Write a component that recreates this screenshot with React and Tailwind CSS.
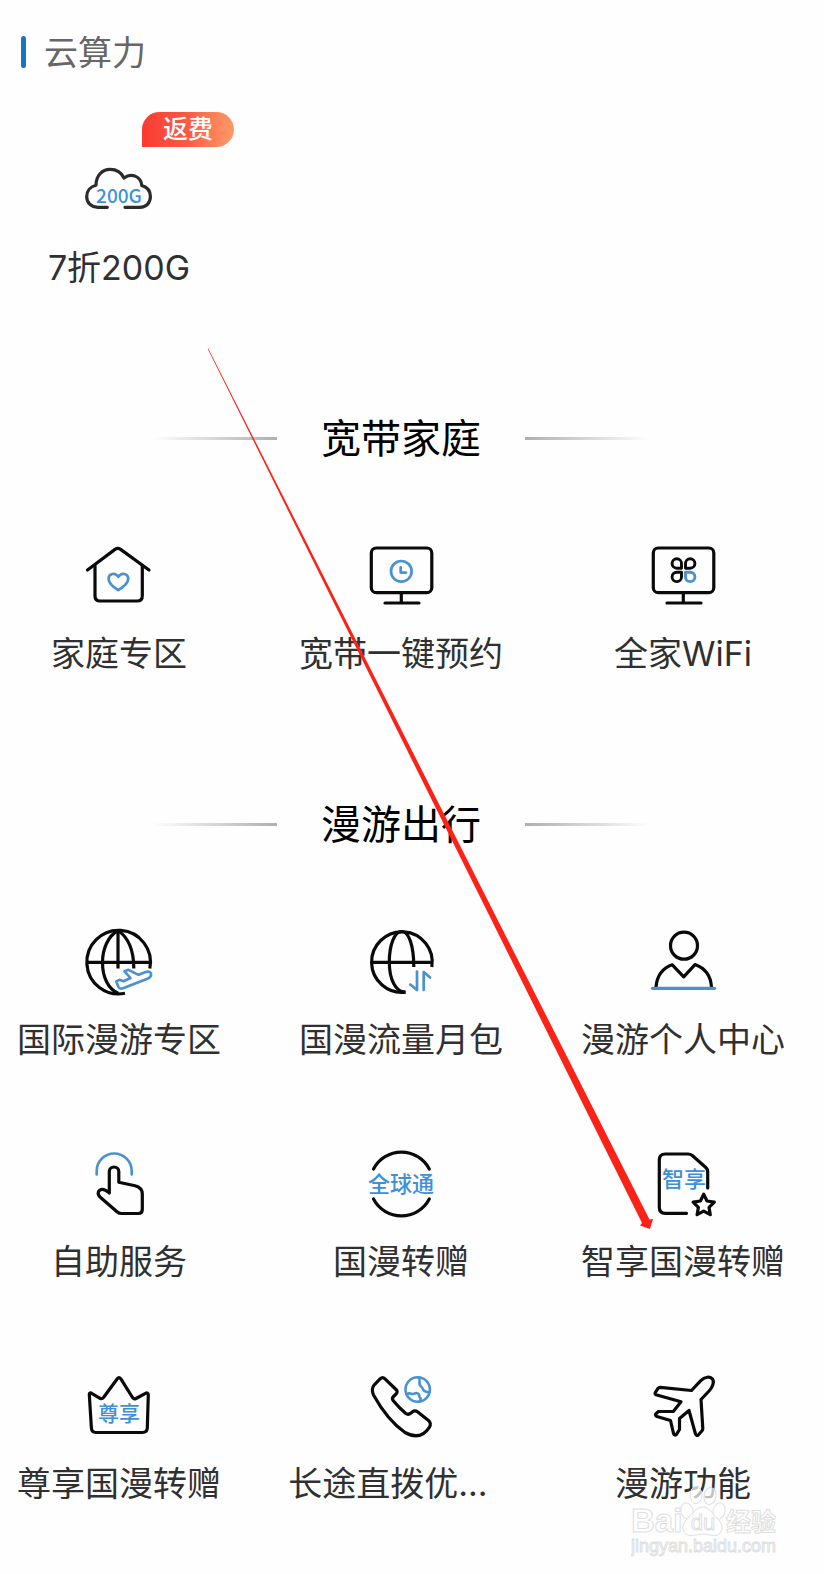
import React from 'react';

const BLUE = '#4a92cf';

const Icon = ({ children }) => (
  <svg viewBox="0 0 72 72" className="w-[72px] h-[72px] overflow-visible" fill="none" stroke="#0a0a0a" strokeWidth="3.2" strokeLinecap="round" strokeLinejoin="round" aria-hidden="true">
    {children}
  </svg>
);

const IconText = ({ x = 36, y, size = 22, children }) => (
  <text x={x} y={y} fontSize={size} textAnchor="middle" fill="#3f90d8" stroke="none" className="font-['Noto_Sans_CJK_SC',sans-serif] font-medium">
    {children}
  </text>
);

const CloudIcon = () => (
  <Icon>
    <g stroke="#2b2b2b">
      <path d="M24.3 54.3H15C8 54.3 3.7 49.5 3.7 43.7C3.7 38 7.5 33.5 13 32.3C13 23 19 16.3 27 16.3C33.5 16.3 38.5 19.5 41 25C48 19.5 58 23 58.7 32.5C64 34 67.4 38 67.4 43.5C67.4 50 63 54.3 57 54.3H42" />
    </g>
    <IconText y={50} size={19}>200G</IconText>
  </Icon>
);

const HomeIcon = () => (
  <Icon>
    <path d="M4.5 31L32 10.4Q34.8 8.5 37.6 10.4L66 31" />
    <path d="M12 26.5V57Q12 62 17 62H54.3Q59.3 62 59.3 57V26.5" />
    <path stroke={BLUE} strokeWidth="2.7" d="M35.3 51.2C29.5 47.7 25.6 44 25.6 39.8C25.6 34.5 32 33 35.3 37.8C38.6 33 45.2 34.5 45.2 39.8C45.2 44 41 47.7 35.3 51.2Z" />
  </Icon>
);

const MonitorIcon = ({ children }) => (
  <Icon>
    <rect x="6.3" y="9" width="60.5" height="44.7" rx="5" />
    <path d="M36.3 54V64M20 64H54" />
    {children}
  </Icon>
);

const ClockMonitorIcon = () => (
  <MonitorIcon>
    <g stroke={BLUE} strokeWidth="2.7">
      <circle cx="36.3" cy="32.3" r="10.3" />
      <path d="M35.7 28.3V33.6H41" />
    </g>
  </MonitorIcon>
);

const WifiMonitorIcon = () => (
  <MonitorIcon>
    <g strokeWidth="2.9">
      <path d="M34.5 29.2H29.8A4.7 4.7 0 1 1 34.5 24.5Z" />
      <path d="M38.5 29.2V24.5A4.7 4.7 0 1 1 43.2 29.2Z" />
      <path d="M34.5 33.2V37.9A4.7 4.7 0 1 1 29.8 33.2Z" />
      <path stroke={BLUE} d="M38.5 33.2H43.2A4.7 4.7 0 1 1 38.5 37.9Z" />
    </g>
  </MonitorIcon>
);

const GlobePlaneIcon = () => (
  <Icon>
    <g strokeLinecap="butt">
      <path d="M42 68.3A31.8 31.8 0 1 1 66.8 43.5" />
      <path d="M3.5 37.3H67M35 5V43.5" />
      <path d="M35 5.5C25 11 19.5 24 19.5 37.5C19.5 52 25 64 35.5 68.5" />
      <path d="M35 5.5C46 13 50.8 26 50.8 43.5" />
    </g>
    <path stroke={BLUE} strokeWidth="2.6" d="M33.3 56.5L35.5 62C36.3 63.8 38 64 40 63.3L65 53.5C70 51 68.500 45.5 63.5 46.8L55.5 49.8L45.5 44.8L41.5 46.3L47.5 53L40.5 56.3L36.5 54.8Z" />
  </Icon>
);

const GlobeDataIcon = () => (
  <Icon>
    <g strokeLinecap="butt">
      <path d="M40.5 67.2A30.3 30.3 0 1 1 66.8 42" />
      <path d="M6 37.3H67" />
      <path d="M40.5 67.2C30.5 67.5 24.3 54 24.3 37C24.3 20 29.5 6.5 36.7 6.5C44 6.5 48.8 21 48.8 42" />
    </g>
    <path stroke={BLUE} strokeWidth="2.7" d="M45.3 59.5L52 65V46.5M58.7 65V47L65 52.5" />
  </Icon>
);

const PersonIcon = () => (
  <Icon>
    <circle cx="37" cy="20.7" r="13.5" />
    <path d="M9 62C10 51 16 43 25.3 39.8L36.7 51.8L48 39.6C57.5 43 63.7 51 64.5 62" />
    <path stroke={BLUE} d="M5.5 63.3H67.5" />
  </Icon>
);

const TouchIcon = () => (
  <Icon>
    <path stroke={BLUE} strokeWidth="2.7" d="M13.7 27.5V24A17.5 17.5 0 0 1 48.7 24V27.5" />
    <path d="M26.3 46V24.5C26.3 18.5 35.8 18.5 35.8 24.5V35.3L52 38.7C57.5 40 59.3 42.5 59.3 47V62.5Q59.3 66.5 55.3 66.5H38.5Q36 66.5 34 64.7L17 50C13.5 46.5 15.5 42.8 19 42.3C22 42 23.5 43.5 26.3 46Z" />
  </Icon>
);

const GlobalPassIcon = () => (
  <Icon>
    <path d="M8.5 22A31.5 31.5 0 0 1 64.3 22" />
    <path d="M8.5 52A31.5 31.5 0 0 0 64.3 52" />
    <IconText y={45}>全球通</IconText>
  </Icon>
);

const SmartCardIcon = () => (
  <Icon>
    <path d="M39.5 66.3H18.3Q12.3 66.3 12.3 60.3V13Q12.3 7 18.3 7H41Q43.5 7 45.3 8.5L58.8 20.5Q60.7 22.3 60.7 24.5V41" />
    <path d="M56.7 47.2L60 54L67.3 55.2L62 60.3L63.3 67.7L56.7 64.2L50.1 67.7L51.4 60.3L46.1 55.2L53.4 54Z" />
    <IconText x={37} y={40}>智享</IconText>
  </Icon>
);

const CrownIcon = () => (
  <Icon>
    <path d="M6.3 25.5C6.3 24 7.5 23.5 8.7 24.3L17 29.3Q19 30.3 20.5 28.5L34.3 9.7Q36 7.7 37.7 9.7L49.5 28.5Q51 30.5 53 29.5L62.5 24.3C64 23.5 65.3 24.3 65.3 25.7L64.3 59Q64 63.5 59.5 63.5H13Q8.7 63.5 8.4 59Z" />
    <IconText y={52} size={21}>尊享</IconText>
  </Icon>
);

const PhoneIcon = () => (
  <Icon>
    <path d="M20 9.8L31 20.5Q33.3 22.7 31 25L28.5 27.5Q26.5 29.5 28.3 31.8C33 37.5 36 40.5 40.5 44.3Q43.3 46.3 46 44L47.5 42.8Q50 41 52.8 43L63.5 51.5Q66.8 54.5 64.3 58.3C58 68 50 69 40 63.5C27 54.5 16 39.5 8.5 26C6.8 22 7 18.5 9.3 15.8L15.3 9.7Q17.7 7.5 20 9.8Z" />
    <g stroke={BLUE} strokeWidth="2.6">
      <circle cx="52.7" cy="20.5" r="12.2" />
      <path d="M53.5 8.5C56.5 12 52.5 15 56 17.5C58.5 19 57.5 22 60.5 22.5L64 23.5" />
      <path d="M42 25.5C45 22.5 46.5 26.5 49.5 24.5C52.5 23 54.5 25.5 54.5 28C56.5 29 55.5 31 54.5 32.5" />
    </g>
  </Icon>
);

const PlaneIcon = () => (
  <Icon>
    <path d="M53.5 11.8C58 7.3 63 7.5 65.3 9.8C67.5 12.5 66 17.5 62.5 21.5L54 30.5L55.8 59.5Q55.8 61 54.8 62L51.5 65.7Q49.5 67.5 48.5 65L42 41.5L32.5 49.5V60.5L29.5 65.3Q27.5 67.2 26.5 64.5L23.5 51.5L10 47.5Q7.5 46.3 9 44.7L11.5 42.5L26.3 42.5L34 32.7L9 25.7Q7.5 25 8.3 23.5L11 19.3Q11.7 18.3 13.3 18.3L44.5 21.5Z" />
  </Icon>
);

const cloudItems = [{ label: '7折200G', icon: CloudIcon, badge: '返费' }];

const homeItems = [
  { label: '家庭专区', icon: HomeIcon },
  { label: '宽带一键预约', icon: ClockMonitorIcon },
  { label: '全家WiFi', icon: WifiMonitorIcon },
];

const roamingItems = [
  { label: '国际漫游专区', icon: GlobePlaneIcon },
  { label: '国漫流量月包', icon: GlobeDataIcon },
  { label: '漫游个人中心', icon: PersonIcon },
  { label: '自助服务', icon: TouchIcon },
  { label: '国漫转赠', icon: GlobalPassIcon },
  { label: '智享国漫转赠', icon: SmartCardIcon },
  { label: '尊享国漫转赠', icon: CrownIcon },
  { label: '长途直拨优...', icon: PhoneIcon, clipped: true },
  { label: '漫游功能', icon: PlaneIcon },
];

const ServiceGrid = ({ items }) => (
  <div className="grid grid-cols-3 gap-y-[84px]">
    {items.map(({ label, icon: ItemIcon, badge, clipped }) => (
      <a key={label} href="#" className="flex flex-col items-center gap-[18px]">
        <span className="relative block">
          <ItemIcon />
          {badge && (
            <span className="absolute left-[59px] -top-[41px] flex items-center justify-center w-[92px] h-[35px] rounded-[18px] rounded-bl-none bg-gradient-to-r from-[#fb3932] via-[#fa5a44] to-[#ff9a66] text-white text-[25px] font-medium whitespace-nowrap">
              {badge}
            </span>
          )}
        </span>
        <span className={`block w-4/5 h-12 text-[34px] leading-[50px] whitespace-nowrap text-[#303030] ${clipped ? 'text-left' : 'text-center'}`}>
          {label}
        </span>
      </a>
    ))}
  </div>
);

const SectionTitle = ({ children }) => (
  <div className="flex items-center justify-center gap-11 mb-[77px]">
    <span className="w-[124px] h-[3px] rounded-l-full bg-gradient-to-r from-transparent to-[#b0aeb0]" />
    <h2 className="h-12 text-[40px] leading-[50px] text-black">{children}</h2>
    <span className="w-[124px] h-[3px] rounded-r-full bg-gradient-to-l from-transparent to-[#b0aeb0]" />
  </div>
);

const Watermark = () => (
  <svg viewBox="0 0 150 80" className="absolute right-[43px] bottom-[14px] w-[150px] h-20 pointer-events-none" fill="#ffffff" fillOpacity="0.7" stroke="#dedede" strokeWidth="1">
    <g>
      <ellipse cx="56" cy="31" rx="6" ry="8" transform="rotate(-15 56 31)" />
      <ellipse cx="65" cy="15" rx="6" ry="8.5" />
      <ellipse cx="79" cy="16" rx="6" ry="8.500" transform="rotate(10 79 16)" />
      <ellipse cx="88" cy="31" rx="6" ry="8" transform="rotate(15 88 31)" />
      <path d="M72 27C78 27 81 33 86 38C91 43 93 48 89 53C85 58 78 54 72 54C66 54 59 58 54 53C50 48 52 43 57 38C62 33 66 27 72 27Z" />
    </g>
    <text x="0" y="52" fontSize="33" className="font-['Liberation_Sans',sans-serif] font-bold">Bai</text>
    <text x="72" y="50" fontSize="22" textAnchor="middle" className="font-['Liberation_Sans',sans-serif]">du</text>
    <text x="95" y="51" fontSize="25" className="font-['Noto_Sans_CJK_SC',sans-serif] font-bold">经验</text>
    <text x="0" y="72" fontSize="18" className="font-['Liberation_Sans',sans-serif]">jingyan.baidu.com</text>
  </svg>
);

const PointerArrow = () => (
  <svg viewBox="0 0 824 1574" className="absolute left-0 top-0 w-[824px] h-[1574px] pointer-events-none" aria-hidden="true">
    <path fill="#fb2317" d="M208 348L649.5 1219.5L653 1219L650 1229L640 1225.5L642 1223L208 349.5Z" />
  </svg>
);

const App = () => {
  return (
    <main className="relative min-h-screen overflow-hidden bg-[#fefefe] pt-7 pb-[67px] font-[Inter,'Noto_Sans_CJK_SC',sans-serif]">
      {/* The three-column area starts slightly off the left edge */}
      <div className="-ml-[22px] flex flex-col gap-[123px]">
        <section>
          <div className="flex items-center gap-[18px] pl-[43px] mb-[77px]">
            <span className="w-[5px] h-8 rounded-full bg-[#1a73c1]" />
            <h2 className="h-12 text-[34px] leading-[50px] text-[#666666]">云算力</h2>
          </div>
          <ServiceGrid items={cloudItems} />
        </section>

        <section>
          <SectionTitle>宽带家庭</SectionTitle>
          <ServiceGrid items={homeItems} />
        </section>

        <section>
          <SectionTitle>漫游出行</SectionTitle>
          <ServiceGrid items={roamingItems} />
        </section>
      </div>

      <Watermark />
      <PointerArrow />
    </main>
  );
};

export default App;
